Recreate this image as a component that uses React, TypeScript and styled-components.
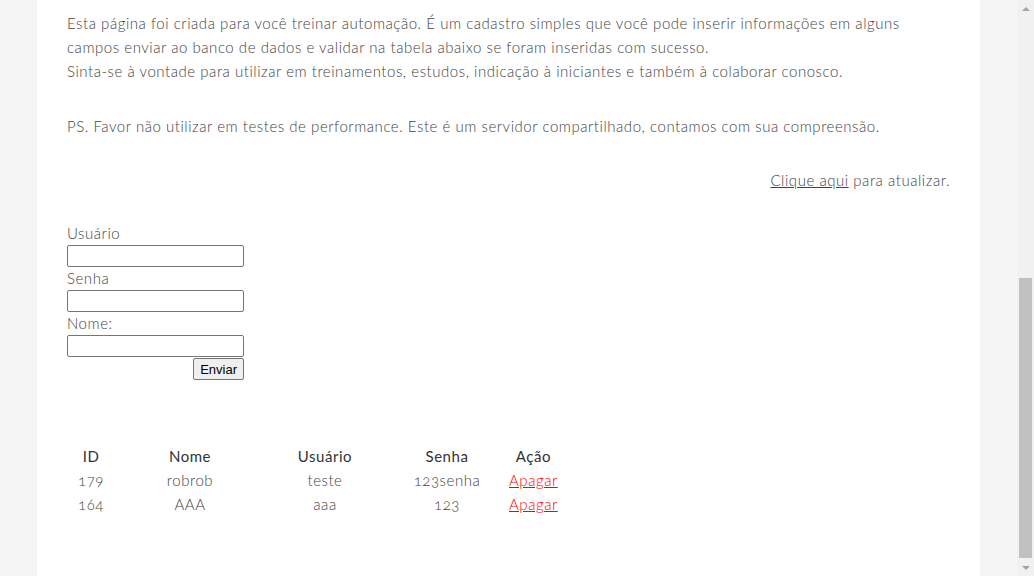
import React from "react";
import styled, { createGlobalStyle } from "styled-components";

const GlobalStyle = createGlobalStyle`
  html, body {
    margin: 0;
    padding: 0;
    height: 100%;
    overflow: hidden;
  }
  body {
    background-color: #f5f5f5;
    font-family: Lato, "Liberation Sans", sans-serif;
    font-weight: 300;
    color: #444;
  }
`;

const Shell = styled.div`
  display: flex;
  height: 100vh;
`;

const Viewport = styled.div`
  flex: 1;
  display: flex;
  justify-content: center;
  overflow: hidden;
`;

const Page = styled.main`
  width: 943px;
  background-color: #fff;
  padding: 11px 30px 0;
  box-sizing: border-box;
  font-size: 15px;
  letter-spacing: 0.54px;
  font-variant-numeric: oldstyle-nums;
`;

const Intro = styled.p`
  margin: 0;
  line-height: 24px;
`;

const Note = styled.p`
  margin: 31px 0 0;
  line-height: 24px;
`;

const Refresh = styled.p`
  margin: 30px 0 0;
  line-height: 24px;
  text-align: right;
`;

const PlainLink = styled.a`
  color: inherit;
  text-decoration: underline;
`;

const Form = styled.form`
  width: 177px;
  margin-top: 30px;
  display: flex;
  flex-direction: column;
`;

const Label = styled.label`
  line-height: 23px;
  height: 23px;
`;

const Input = styled.input`
  width: 177px;
  height: 22px;
  box-sizing: border-box;
  border: 1px solid #767676;
  border-radius: 2px;
  margin: 0;
  padding: 1px 2px;
  font-size: 13px;
`;

const Button = styled.button`
  align-self: flex-end;
  margin-top: 1px;
  height: 22px;
  padding: 1px 6px;
  font-family: Arial, "Liberation Sans", sans-serif;
  font-size: 13px;
  letter-spacing: 0;
  color: #000;
  background-color: #efefef;
  border: 1px solid #767676;
  border-radius: 2px;
`;

const Table = styled.table`
  margin-top: 64px;
  border-collapse: collapse;
  table-layout: fixed;
`;

const Th = styled.th<{ $w: number }>`
  width: ${(p) => p.$w}px;
  padding: 0;
  height: 24px;
  font-weight: 400;
  color: #333;
  text-align: center;
`;

const Td = styled.td`
  padding: 0;
  height: 24px;
  text-align: center;
`;

const DangerLink = styled.a`
  color: #f00;
  text-decoration: underline;
`;

/* fake window scrollbar, page is scrolled to the bottom */
const Scrollbar = styled.div`
  width: 17px;
  flex-shrink: 0;
  display: flex;
  flex-direction: column;
  background-color: #f1f1f1;
`;

const Arrow = styled.div<{ $down?: boolean }>`
  height: 17px;
  display: flex;
  align-items: center;
  justify-content: center;

  &::before {
    content: "";
    border-left: 4px solid transparent;
    border-right: 4px solid transparent;
    ${(p) =>
      p.$down ? "border-top: 4px solid #a3a3a3;" : "border-bottom: 4px solid #a3a3a3;"}
  }
`;

const Track = styled.div`
  flex: 1;
  display: flex;
  flex-direction: column;
  justify-content: flex-end;
  padding: 0 2px;
`;

const Thumb = styled.div`
  height: 280px;
  margin-bottom: 1px;
  background-color: #c1c1c1;
`;

const rows = [
  { id: 179, nome: "robrob", usuario: "teste", senha: "123senha" },
  { id: 164, nome: "AAA", usuario: "aaa", senha: "123" },
];

export default function App() {
  return (
    <>
      <GlobalStyle />
      <Shell>
        <Viewport>
          <Page>
            <Intro>
              Esta página foi criada para você treinar automação. É um cadastro simples que você
              pode inserir informações em alguns campos enviar ao banco de dados e validar na tabela
              abaixo se foram inseridas com sucesso.
              <br />
              Sinta-se à vontade para utilizar em treinamentos, estudos, indicação à iniciantes e
              também à colaborar conosco.
            </Intro>
            <Note>
              PS. Favor não utilizar em testes de performance. Este é um servidor compartilhado,
              contamos com sua compreensão.
            </Note>
            <Refresh>
              <PlainLink href="#">Clique aqui</PlainLink> para atualizar.
            </Refresh>

            <Form onSubmit={(e) => e.preventDefault()}>
              <Label htmlFor="usuario">Usuário</Label>
              <Input id="usuario" type="text" />
              <Label htmlFor="senha">Senha</Label>
              <Input id="senha" type="password" />
              <Label htmlFor="nome">Nome:</Label>
              <Input id="nome" type="text" />
              <Button type="submit">Enviar</Button>
            </Form>

            <Table>
              <thead>
                <tr>
                  <Th $w={48}>ID</Th>
                  <Th $w={150}>Nome</Th>
                  <Th $w={120}>Usuário</Th>
                  <Th $w={124}>Senha</Th>
                  <Th $w={48}>Ação</Th>
                </tr>
              </thead>
              <tbody>
                {rows.map((r) => (
                  <tr key={r.id}>
                    <Td>{r.id}</Td>
                    <Td>{r.nome}</Td>
                    <Td>{r.usuario}</Td>
                    <Td>{r.senha}</Td>
                    <Td>
                      <DangerLink href="#">Apagar</DangerLink>
                    </Td>
                  </tr>
                ))}
              </tbody>
            </Table>
          </Page>
        </Viewport>
        <Scrollbar>
          <Arrow />
          <Track>
            <Thumb />
          </Track>
          <Arrow $down />
        </Scrollbar>
      </Shell>
    </>
  );
}
